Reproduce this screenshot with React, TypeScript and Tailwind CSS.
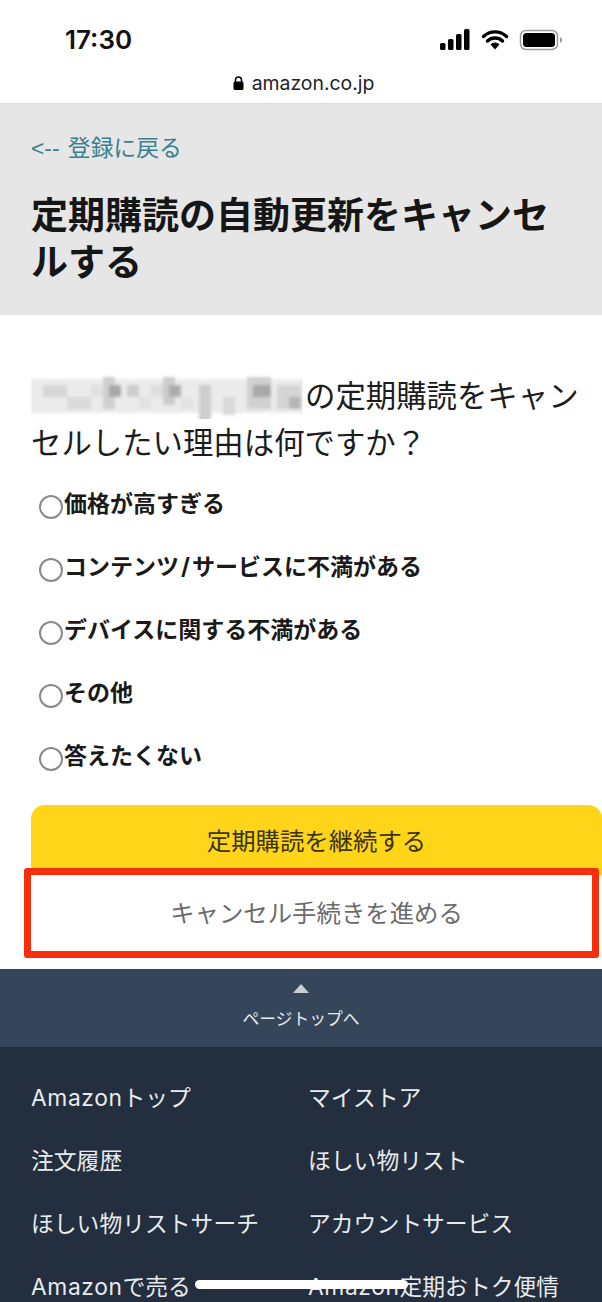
const options = ["価格が高すぎる", "コンテンツ/サービスに不満がある", "デバイスに関する不満がある", "その他", "答えたくない"];
const links = [
  ["Amazonトップ", "マイストア"],
  ["注文履歴", "ほしい物リスト"],
  ["ほしい物リストサーチ", "アカウントサービス"],
  ["Amazonで売る", "Amazon定期おトク便情"],
];
const mosaic: [number, number, number, number, string][] = [
  [0, 6, 272, 34, "#ebebeb"],
  [12, 12, 24, 12, "#d6d6d6"],
  [36, 24, 24, 12, "#dadada"],
  [60, 12, 12, 12, "#e0e0e0"],
  [72, 4, 12, 32, "#cfcfcf"],
  [78, 12, 12, 12, "#a8a8a8"],
  [96, 12, 12, 12, "#cdcdcd"],
  [108, 24, 12, 12, "#e2e2e2"],
  [120, 12, 12, 12, "#dedede"],
  [132, 4, 12, 28, "#cccccc"],
  [138, 12, 12, 12, "#adadad"],
  [150, 24, 12, 12, "#e2e2e2"],
  [168, 12, 12, 36, "#cdcdcd"],
  [192, 24, 12, 18, "#d9d9d9"],
  [216, 4, 24, 32, "#d0d0d0"],
  [222, 12, 18, 12, "#a8a8a8"],
  [246, 12, 24, 24, "#d4d4d4"],
  [258, 24, 12, 12, "#b5b5b5"],
];

function Option({ text }: { text: string }) {
  const parts = text.split("/");
  return (
    <span className="ml-[1px] text-[23px] font-bold leading-[32px] text-[#1a1a1a]">
      {parts[0]}
      {parts.length > 1 && <span className="px-[2px]">/</span>}
      {parts[1]}
    </span>
  );
}

function FooterLink({ text }: { text: string }) {
  if (!text.startsWith("Amazon")) return <span className="whitespace-nowrap">{text}</span>;
  return (
    <span className="whitespace-nowrap">
      <span className="tracking-[0.6px]">Amazon</span>
      {text.slice(6)}
    </span>
  );
}

export default function App() {
  return (
    <div className="relative h-[1302px] w-[602px] overflow-hidden bg-white font-['Inter','Noto_Sans_CJK_JP',sans-serif]">
      <header className="h-[104px] border-b border-[#dcdcdc] bg-white">
        <div className="flex h-[62px] items-end justify-between pb-[6px] pl-[65px] pr-[40px]">
          <span className="text-[26px] font-semibold leading-[32px] text-[#111]">17:30</span>
          <svg width="122" height="24" viewBox="0 0 122 24" className="mb-[4px]">
            <rect x="0" y="15" width="5.500" height="7" rx="1.500" fill="#000" />
            <rect x="8" y="11" width="5.500" height="11" rx="1.500" fill="#000" />
            <rect x="16" y="6" width="5.500" height="16" rx="1.500" fill="#000" />
            <rect x="24" y="1" width="5.500" height="21" rx="1.500" fill="#000" />
            <path d="M43.500 8.500a16.500 16.500 0 0 1 23 0M47.500 13a11 11 0 0 1 15 0" fill="none" stroke="#000" strokeWidth="3.400" strokeLinecap="round" />
            <path d="M50.500 16.500a6 6 0 0 1 9 0L55 21.500z" fill="#000" />
            <rect x="80.500" y="2.500" width="37" height="19" rx="5.500" fill="none" stroke="#9b9b9b" strokeWidth="1.500" />
            <rect x="83" y="5" width="32" height="14" rx="3.500" fill="#000" />
            <path d="M120 9v6c1.200-.4 2-1.600 2-3s-.8-2.600-2-3z" fill="#9b9b9b" />
          </svg>
        </div>
        <div className="flex items-center justify-center gap-[8px] pl-[5px] pt-[7px]">
          <svg width="11" height="14" viewBox="0 0 11 14">
            <path d="M2.500 6V4a3 3 0 0 1 6 0v2" fill="none" stroke="#000" strokeWidth="1.500" />
            <rect x="0.500" y="5.500" width="10" height="8.500" rx="1.500" fill="#000" />
          </svg>
          <span className="text-[19.400px] leading-[28px] text-[#222]">amazon.co.jp</span>
        </div>
      </header>

      <section className="h-[211px] bg-[#e6e6e6] pl-[31px] pr-[20px] pt-[27px]">
        <p className="text-[22.800px] leading-[34px] text-[#38808f]">
          <span className="mr-[2px] font-['Liberation_Sans']">{"<-- "}</span>登録に戻る
        </p>
        <h1 className="mt-[27px] text-[37px] font-bold leading-[47px] text-[#161616]">定期購読の自動更新をキャンセルする</h1>
      </section>

      <main className="pl-[31px] pt-[58px]">
        <p className="w-[552px] text-[30.400px] leading-[47px] text-[#1c1c1c]">
          <svg width="272" height="46" viewBox="0 0 272 46" className="mr-[2px] inline-block align-[-12px]">
            <defs>
              <filter id="m"><feGaussianBlur stdDeviation="1.600" /></filter>
            </defs>
            <g filter="url(#m)">
              {mosaic.map(([x, y, w, h, c], i) => (
                <rect key={i} x={x} y={y} width={w} height={h} fill={c} />
              ))}
            </g>
          </svg>
          の定期購読をキャンセルしたい理由は何ですか？
        </p>
        <ul className="mt-[5px] pl-[8px]">
          {options.map((o) => (
            <li key={o} className="flex h-[63px] items-center">
              <span className="mt-[6px] h-[24px] w-[24px] shrink-0 rounded-full border-[2px] border-[#8a8a8a] bg-white" />
              <Option text={o} />
            </li>
          ))}
        </ul>
        <div className="mt-[18px] w-[571px]">
          <div className="flex h-[70px] justify-center rounded-t-[14px] bg-[#fed518] pt-[18px] text-[24.400px] leading-[36px] text-[#3b3312]">
            定期購読を継続する
          </div>
          <div className="flex h-[75px] items-center justify-center rounded-[10px] bg-white text-[24.400px] leading-[36px] text-[#6b6b6b]">
            キャンセル手続きを進める
          </div>
        </div>
      </main>

      <div className="absolute left-[24px] top-[868px] h-[90px] w-[575px] rounded-[3px] border-[7px] border-[#f62e0c]" />

      <footer className="mt-[19px]">
        <div className="flex h-[78px] flex-col items-center bg-[#36465a] pt-[15px]">
          <svg width="16" height="10" viewBox="0 0 16 10"><path d="M8 0l8 9H0z" fill="#c9cdd3" /></svg>
          <span className="mt-[12px] text-[16.800px] leading-[26px] text-[#e8eaed]">ページトップへ</span>
        </div>
        <div className="grid grid-cols-[277px_1fr] bg-[#232e3e] pl-[31px] pt-[19px] text-[22.800px] leading-[63px] text-[#e9ebee]">
          {links.flat().map((l) => (
            <FooterLink key={l} text={l} />
          ))}
        </div>
      </footer>

      <div className="absolute left-[195px] top-[1280px] h-[9px] w-[213px] rounded-full bg-white" />
    </div>
  );
}
